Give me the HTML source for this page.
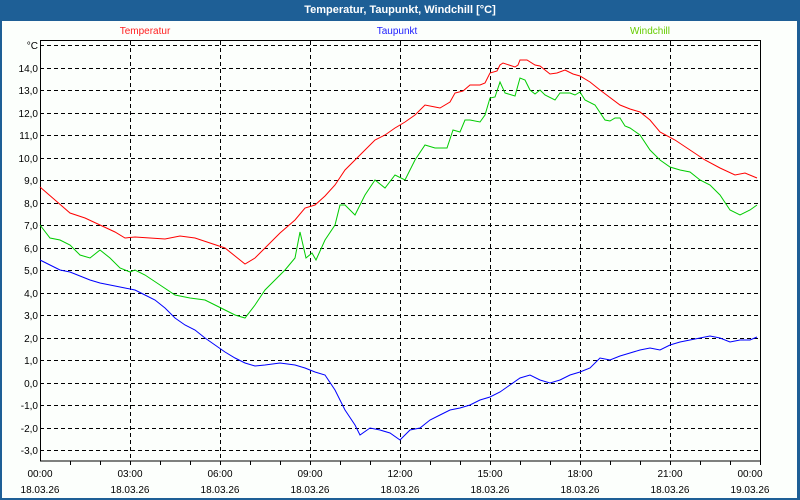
<!DOCTYPE html>
<html><head><meta charset="utf-8"><style>
html,body{margin:0;padding:0;width:800px;height:500px;overflow:hidden;background:#1e5f96;}
svg{display:block}
text{font-family:"Liberation Sans",sans-serif;font-size:10px;}
</style></head><body>
<svg width="800" height="500" xmlns="http://www.w3.org/2000/svg">
<rect x="0" y="0" width="800" height="500" fill="#1e5f96"/>
<rect x="2" y="21" width="795" height="477" fill="#fcfffc"/>
<text x="400" y="13" text-anchor="middle" fill="#fff" font-weight="bold" style="font-size:11px">Temperatur, Taupunkt, Windchill [°C]</text>
<text x="145" y="34" text-anchor="middle" fill="#ff2020">Temperatur</text>
<text x="397" y="34" text-anchor="middle" fill="#2020ff">Taupunkt</text>
<text x="650" y="34" text-anchor="middle" fill="#66cc00">Windchill</text>
<g stroke="#000" stroke-width="1" stroke-dasharray="4,3" fill="none">
<path d="M40 45.5H760M40 68.5H760M40 90.5H760M40 113.5H760M40 135.5H760M40 158.5H760M40 180.5H760M40 203.5H760M40 225.5H760M40 248.5H760M40 270.5H760M40 293.5H760M40 315.5H760M40 338.5H760M40 360.5H760M40 383.5H760M40 405.5H760M40 428.5H760M40 450.5H760"/>
<path d="M130.5 41V461M220.5 41V461M310.5 41V461M400.5 41V461M490.5 41V461M580.5 41V461M670.5 41V461"/>
</g>
<rect x="40.5" y="40.5" width="720" height="420.5" fill="none" stroke="#000"/>
<path stroke="#000" d="M70.5 461v4M100.5 461v4M130.5 461v4M160.5 461v4M190.5 461v4M220.5 461v4M250.5 461v4M280.5 461v4M310.5 461v4M340.5 461v4M370.5 461v4M400.5 461v4M430.5 461v4M460.5 461v4M490.5 461v4M520.5 461v4M550.5 461v4M580.5 461v4M610.5 461v4M640.5 461v4M670.5 461v4M700.5 461v4M730.5 461v4M760.5 461v4"/>
<g text-anchor="end" fill="#000">
<text x="38" y="49">°C</text>
<text x="38" y="72">14,0</text><text x="38" y="94">13,0</text><text x="38" y="117">12,0</text><text x="38" y="139">11,0</text><text x="38" y="162">10,0</text><text x="38" y="184">9,0</text><text x="38" y="207">8,0</text><text x="38" y="229">7,0</text><text x="38" y="252">6,0</text><text x="38" y="274">5,0</text><text x="38" y="297">4,0</text><text x="38" y="319">3,0</text><text x="38" y="342">2,0</text><text x="38" y="364">1,0</text><text x="38" y="387">0,0</text><text x="38" y="409">-1,0</text><text x="38" y="432">-2,0</text><text x="38" y="454">-3,0</text>
</g>
<g text-anchor="middle" fill="#000">
<text x="40" y="477">00:00</text><text x="40" y="493">18.03.26</text>
<text x="130" y="477">03:00</text><text x="130" y="493">18.03.26</text>
<text x="220" y="477">06:00</text><text x="220" y="493">18.03.26</text>
<text x="310" y="477">09:00</text><text x="310" y="493">18.03.26</text>
<text x="400" y="477">12:00</text><text x="400" y="493">18.03.26</text>
<text x="490" y="477">15:00</text><text x="490" y="493">18.03.26</text>
<text x="580" y="477">18:00</text><text x="580" y="493">18.03.26</text>
<text x="670" y="477">21:00</text><text x="670" y="493">18.03.26</text>
<text x="750" y="477">00:00</text><text x="750" y="493">19.03.26</text>
</g>
<g fill="none" stroke-width="1">
<polyline stroke="#ff0000" points="40,187 55,200 70,213 85,218 100,225 115,232 125,238 135,237 150,238 165,239 180,236 195,238 210,243 225,248 235,256 245,264 255,258 265,248 280,233 295,220 305,208 315,205 325,196 335,185 345,170 355,160 365,150 375,140 385,135 395,128 405,122 415,115 425,105 435,107 440,108 450,102 455,93 463,91 470,85 480,85 485,83 490,73 497,71 500,65 503,63 515,67 518,65 520,60 527,60 535,65 540,66 545,70 550,74 557,73 565,70 573,74 580,76 590,82 600,90 620,105 630,109 640,112 650,120 660,132 675,140 690,150 705,160 720,168 735,175 745,173 757,178"/>
<polyline stroke="#00cc00" points="40,225 50,238 60,240 70,245 80,255 90,258 100,250 110,258 120,268 130,272 135,270 145,275 160,285 175,295 190,298 205,300 215,305 225,310 235,315 245,318 255,305 265,290 275,280 285,270 295,258 300,232 306,258 312,253 316,260 325,240 335,225 340,205 345,205 350,210 355,215 365,195 375,180 385,188 395,175 405,180 415,160 425,145 435,148 440,148 447,148 453,130 460,132 465,120 470,120 480,122 485,115 490,98 495,97 500,82 505,93 515,96 520,78 525,80 530,90 535,94 540,90 545,95 555,100 560,93 570,93 575,95 580,92 585,100 595,105 605,120 610,121 615,118 620,118 625,126 630,128 640,135 650,150 660,160 670,167 680,170 690,172 700,180 710,185 720,195 730,210 740,215 750,210 757,205"/>
<polyline stroke="#0000ff" points="40,260 50,265 60,270 70,272 80,276 90,280 100,283 110,285 125,288 135,290 145,295 155,300 165,308 175,318 185,325 195,330 205,338 215,345 225,352 235,358 245,363 255,366 265,365 280,363 295,365 305,368 315,372 325,375 335,390 345,410 355,425 360,435 370,428 380,430 390,433 400,440 410,430 420,428 430,420 440,415 450,410 460,408 470,405 480,400 490,397 500,392 510,385 520,378 530,375 540,380 550,383 560,380 570,375 580,372 590,368 600,358 610,360 620,356 630,353 640,350 650,348 660,350 670,345 680,342 690,340 700,338 710,336 720,338 730,342 740,340 750,340 757,337"/>
</g>
</svg>
</body></html>
